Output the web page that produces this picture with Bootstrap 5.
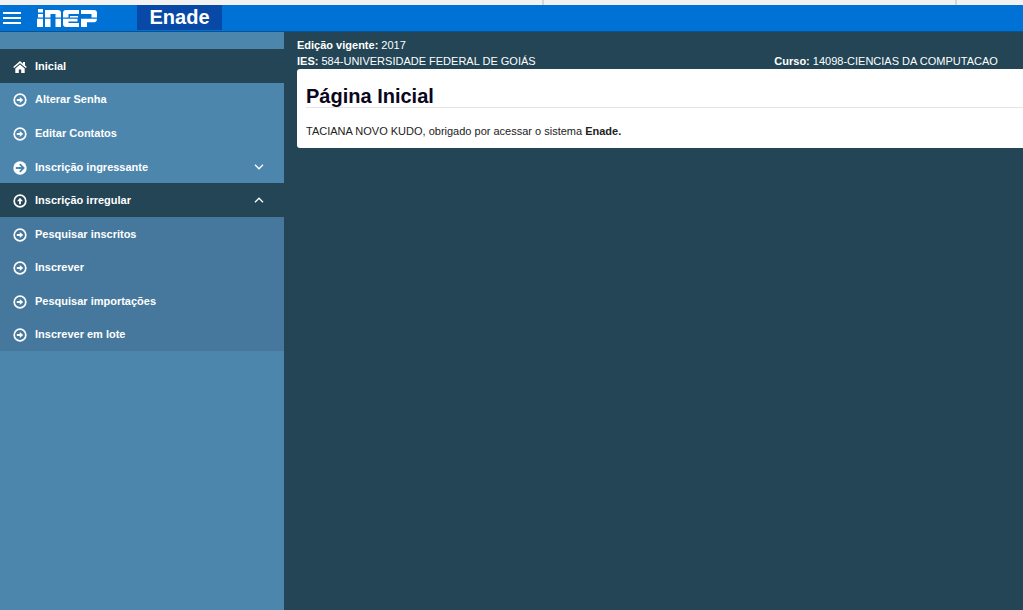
<!DOCTYPE html>
<html lang="pt-BR">
<head>
<meta charset="utf-8">
<meta name="viewport" content="width=device-width, initial-scale=1">
<title>Enade - Página Inicial</title>
<link href="https://cdn.jsdelivr.net/npm/bootstrap@5.3.0/dist/css/bootstrap.min.css" rel="stylesheet">
<style>
  body { background: #234555; color: #fff; font-family: "Liberation Sans", Arial, sans-serif; font-size: 11px; line-height: 16px; }
  .strip { height: 5px; background: #f2f2f2; }
  .strip span { border-right: 2px solid #d4d6d8; }
  .strip span:first-child { width: 53.2%; }
  .strip span:nth-child(2) { width: 40.3%; }
  .topbar { height: 27px; background: #0072d6; border-bottom: 1px solid #0a5392; }
  .menu-btn { width: 37px; padding-left: 3px; }
  .logo-link { width: 100px; }
  .system { width: 85px; background: #0849a8; color: #fff; font-size: 20px; line-height: 25px; }
  .sidebar { width: 284px; padding-top: 17px; background: #4d86ad; }
  .menu { display: grid; grid-auto-rows: 1fr; height: 168px; }
  .submenu { height: 134px; background: #45789c; }
  .menu a { color: #fff; padding: 0 20px 0 13px; gap: 8px; }
  .menu .on { background: #234555; }
  .menu .sign { margin-top: 2px; }
  .context { padding: 5px 10px 0 0; }
  .panel { padding: 17px 0 9px 9px; background: #fff; color: #222; border-radius: 3px 0 0 3px; }
  .panel h1 { font-size: 20px; line-height: 21px; color: #0b0620; border-bottom: 1px solid #e4e4e8; margin-bottom: 15px; }
  .main-area { padding-left: 13px; }
</style>
</head>
<body class="d-flex flex-column min-vh-100">
<svg class="d-none" aria-hidden="true">
  <symbol id="ring" viewBox="0 0 14 14"><circle cx="7" cy="7" r="5.8" fill="none" stroke="#fff" stroke-width="1.7"/><path d="M3.8 6.1h3V4L10.2 7l-3.4 3V7.9h-3z" fill="#fff"/></symbol>
  <symbol id="disc" viewBox="0 0 14 14"><circle cx="7" cy="7" r="6.7" fill="#fff"/><path d="M2.8 7h7M6.8 3.2 10.6 7l-3.8 3.8" fill="none" stroke="#4d86ad" stroke-width="1.8"/></symbol>
  <symbol id="home" viewBox="0 0 14 14"><path d="M.7 7.5 7 2.1l6.3 5.4" fill="none" stroke="#fff" stroke-width="1.6"/><path d="M10 2h2v4l-2-1.7zM7 4.6 2.3 8.5V13h3.5V9.6h2.4V13h3.5V8.5z" fill="#fff"/></symbol>
</svg>
<div class="strip d-flex"><span></span><span></span></div>
<header class="topbar d-flex align-items-start">
  <button type="button" class="menu-btn btn border-0 rounded-0 py-0 pe-0 h-100 d-flex align-items-center" aria-label="Menu">
    <svg width="18" height="14" viewBox="0 0 18 14"><path d="M0 2h18M0 7h18M0 12h18" stroke="#fff" stroke-width="2"/></svg>
  </button>
  <a href="#" class="logo-link h-100 d-flex align-items-center" aria-label="INEP">
    <svg width="60" height="18" viewBox="0 0 60 18" fill="#fff"><path d="M1 0h5v3.5H1zM1 5h5v3.5H1zM0 9.7h6V18H0zM8 1h13q3 0 3 3v4.5h-5.500V5h-5v3.500H8zM8 9.700h5.500V18H8zM18.500 9.700H24V18h-5.500zM26 4q0-3 3-3h13v4H31.500v3.500H26zM26 9.700h14.500v2.800h-9V14H42v4H29q-3 0-3-3zM44 1h13q3 0 3 3v4.500h-5.500V5H44zM44 9.700h16q-.2 3.500-3 3.500h-7V18h-6zM33 7h8v1.500h-8z"/></svg>
  </a>
  <span class="system fw-bold text-center">Enade</span>
</header>
<div class="d-flex flex-grow-1">
  <nav class="sidebar flex-shrink-0" aria-label="Principal">
    <ul class="menu list-unstyled mb-0 fw-bold">
      <li><a href="#" class="on d-flex align-items-center h-100 text-decoration-none"><svg class="sign" width="14" height="14"><use href="#home"/></svg>Inicial</a></li>
      <li><a href="#" class="d-flex align-items-center h-100 text-decoration-none"><svg class="sign" width="14" height="14"><use href="#ring"/></svg>Alterar Senha</a></li>
      <li><a href="#" class="d-flex align-items-center h-100 text-decoration-none"><svg class="sign" width="14" height="14"><use href="#ring"/></svg>Editar Contatos</a></li>
      <li><a href="#" class="d-flex align-items-center h-100 text-decoration-none"><svg class="sign" width="14" height="14"><use href="#disc"/></svg>Inscrição ingressante<svg class="ms-auto" width="10" height="6" viewBox="0 0 10 6"><path d="M1 .8 5 4.8 9 .8" fill="none" stroke="#fff" stroke-width="1.3"/></svg></a></li>
      <li><a href="#submenu" class="on d-flex align-items-center h-100 text-decoration-none" aria-expanded="true"><svg class="sign" width="14" height="14" viewBox="0 0 14 14"><use href="#ring" transform="rotate(-90 7 7)"/></svg>Inscrição irregular<svg class="ms-auto" width="10" height="6" viewBox="0 0 10 6"><path d="M1 5.2 5 1.2 9 5.2" fill="none" stroke="#fff" stroke-width="1.3"/></svg></a></li>
    </ul>
    <ul id="submenu" class="menu submenu list-unstyled mb-0 fw-bold">
      <li><a href="#" class="d-flex align-items-center h-100 text-decoration-none"><svg class="sign" width="14" height="14"><use href="#ring"/></svg>Pesquisar inscritos</a></li>
      <li><a href="#" class="d-flex align-items-center h-100 text-decoration-none"><svg class="sign" width="14" height="14"><use href="#ring"/></svg>Inscrever</a></li>
      <li><a href="#" class="d-flex align-items-center h-100 text-decoration-none"><svg class="sign" width="14" height="14"><use href="#ring"/></svg>Pesquisar importações</a></li>
      <li><a href="#" class="d-flex align-items-center h-100 text-decoration-none"><svg class="sign" width="14" height="14"><use href="#ring"/></svg>Inscrever em lote</a></li>
    </ul>
  </nav>
  <main class="main-area flex-grow-1">
    <div class="context">
      <div><b>Edição vigente:</b> 2017</div>
      <div class="row gx-0">
        <div class="col-8"><b>IES:</b> 584-UNIVERSIDADE FEDERAL DE GOIÁS</div>
        <div class="col-4"><b>Curso:</b> 14098-CIENCIAS DA COMPUTACAO</div>
      </div>
    </div>
    <section class="panel">
      <h1 class="fw-bold">Página Inicial</h1>
      <p class="mb-0">TACIANA NOVO KUDO, obrigado por acessar o sistema <b>Enade.</b></p>
    </section>
  </main>
</div>
<script src="https://cdn.jsdelivr.net/npm/bootstrap@5.3.0/dist/js/bootstrap.bundle.min.js"></script>
</body>
</html>
